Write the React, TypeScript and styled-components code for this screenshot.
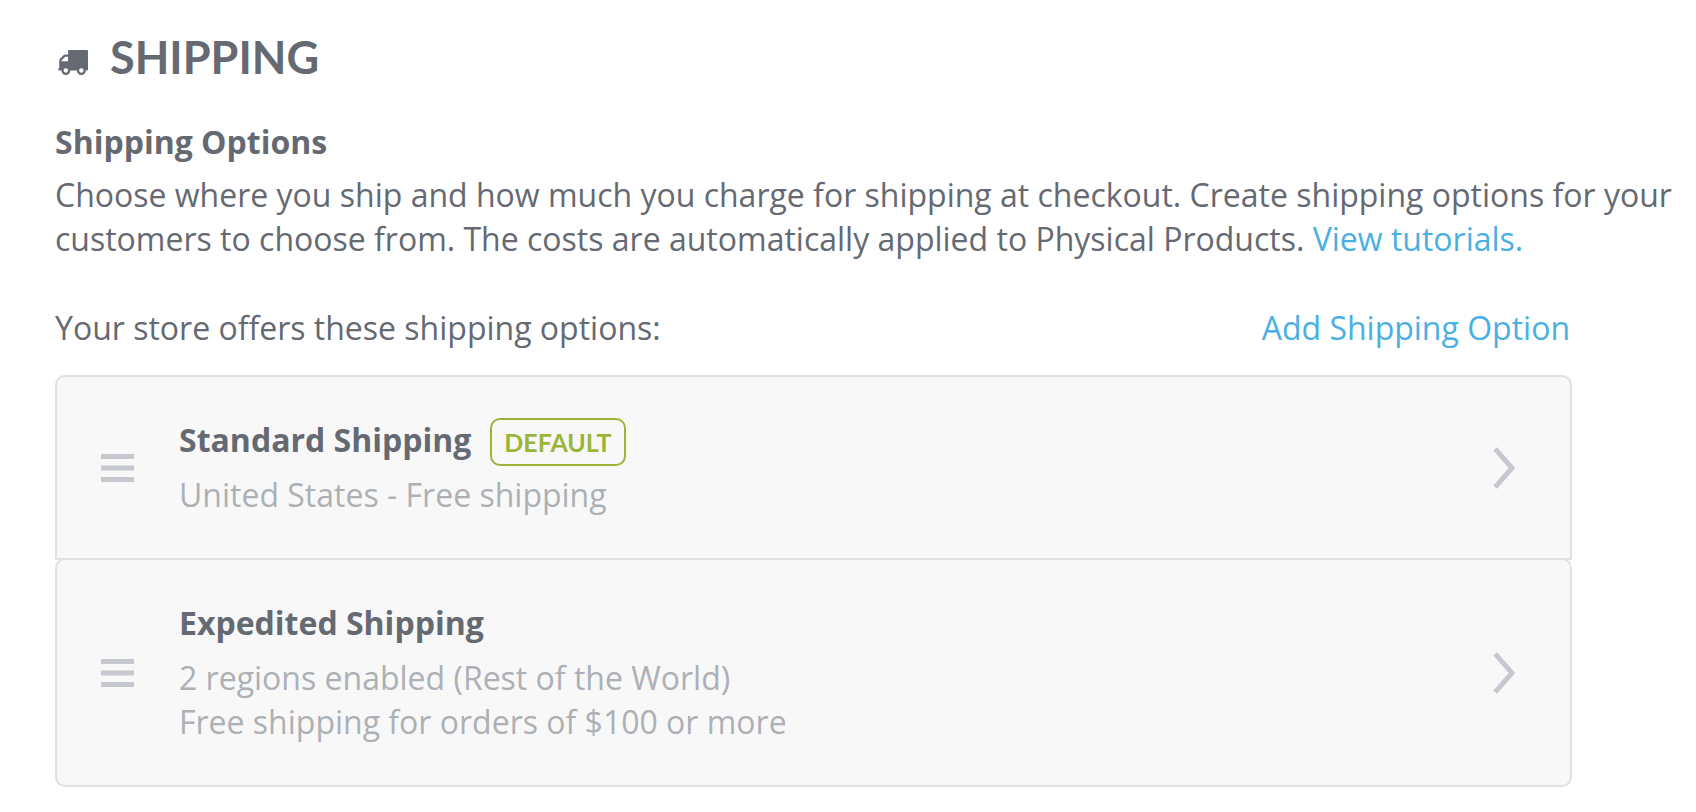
import React from "react";
import styled, { createGlobalStyle } from "styled-components";

const color = {
  text: "#656972",
  muted: "#adb0b4",
  link: "#4ab0e2",
  green: "#9bb53a",
  icon: "#c5c8ce",
  border: "#dfe0e1",
  card: "#f8f8f8",
};

const GlobalStyle = createGlobalStyle`
  *, *::before, *::after { box-sizing: border-box; }
  body {
    margin: 0;
    background: #fff;
    color: ${color.text};
    font-family: "Open Sans", sans-serif;
    font-size: 32px;
    line-height: 44px;
  }
  h1, h2, h3, p, ul { margin: 0; padding: 0; }
`;

const Page = styled.main`
  padding: 31px 8px 24px 55px;
`;

const Header = styled.header`
  display: flex;
  align-items: center;
  gap: 22px;
`;

const TruckIcon = styled.svg`
  width: 31px;
  height: 25px;
  margin-top: 10px;
  margin-left: 2px;
  fill: currentColor;
`;

const PageTitle = styled.h1`
  font-family: Lato, sans-serif;
  font-size: 45px;
  font-weight: 700;
  line-height: 52px;
`;

const SectionTitle = styled.h2`
  margin-top: 37px;
  font-size: 32px;
  font-weight: 700;
  line-height: 44px;
`;

const Description = styled.p`
  margin-top: 9px;
`;

const Link = styled.a`
  color: ${color.link};
  text-decoration: none;
`;

const Options = styled.section`
  margin: 45px 116px 0 0;
`;

const Toolbar = styled.div`
  display: flex;
  justify-content: space-between;
  align-items: center;
  padding-right: 2px;
`;

const TextButton = styled.button`
  padding: 0;
  border: 0;
  background: none;
  color: ${color.link};
  font: inherit;
  cursor: pointer;
`;

const OptionList = styled.ul`
  margin-top: 25px;
  list-style: none;
`;

const OptionCard = styled.li`
  display: flex;
  align-items: center;
  padding: 41px 55px 41px 44px;
  border: 2px solid ${color.border};
  border-radius: 10px;
  background: ${color.card};

  &:not(:last-child) {
    border-bottom-left-radius: 0;
    border-bottom-right-radius: 0;
  }

  & + & {
    margin-top: -2px;
  }
`;

const IconButton = styled.button`
  display: flex;
  flex: none;
  padding: 0;
  border: 0;
  background: none;
  color: ${color.icon};
  cursor: pointer;
`;

const OptionBody = styled.div`
  flex: 1;
  margin-left: 45px;
`;

const OptionHeading = styled.div`
  display: flex;
  align-items: center;
  gap: 19px;
  height: 44px;
`;

const OptionName = styled.h3`
  font-size: 32px;
  font-weight: 700;
  line-height: 44px;
`;

const Badge = styled.span`
  margin-top: 4px;
  padding: 0 12px;
  border: 2px solid ${color.green};
  border-radius: 10px;
  color: ${color.green};
  font-family: Lato, sans-serif;
  font-size: 25px;
  font-weight: 700;
  line-height: 44px;
`;

const OptionDetails = styled.div`
  margin-top: 11px;
  color: ${color.muted};
`;

type ShippingOption = { name: string; isDefault?: boolean; details: string[] };

const shippingOptions: ShippingOption[] = [
  {
    name: "Standard Shipping",
    isDefault: true,
    details: ["United States - Free shipping"],
  },
  {
    name: "Expedited Shipping",
    details: [
      "2 regions enabled (Rest of the World)",
      "Free shipping for orders of $100 or more",
    ],
  },
];

const Truck = () => (
  <TruckIcon viewBox="0 256 1792 1408" preserveAspectRatio="none" aria-hidden="true">
    <path d="M640 1408q0-52-38-90t-90-38-90 38-38 90 38 90 90 38 90-38 38-90zm-384-512h384v-256h-158q-13 0-22 9l-195 195q-9 9-9 22v30zm1280 512q0-52-38-90t-90-38-90 38-38 90 38 90 90 38 90-38 38-90zm256-1088v1024q0 15-4 26.5t-13.5 18.5-16.5 11.5-23.5 6-22.5 2-25.5 0-22.5-.5q0 106-75 181t-181 75-181-75-75-181h-384q0 106-75 181t-181 75-181-75-75-181h-64q-3 0-22.5.5t-25.5 0-22.5-2-23.5-6-16.5-11.5-13.5-18.5-4-26.5q0-26 19-45t45-19v-320q0-8-.5-35t0-38 2.5-34.5 6.5-37 14-30.5 22.5-30l198-198q19-19 50.5-32t58.5-13h160v-192q0-26 19-45t45-19h1024q26 0 45 19t19 45z" />
  </TruckIcon>
);

const Grip = () => (
  <svg width="33" height="28" viewBox="0 0 33 28" fill="currentColor" aria-hidden="true">
    <path d="M0 0h33v5H0zM0 11.5h33v5H0zM0 23h33v5H0z" />
  </svg>
);

const Chevron = () => (
  <svg width="22" height="42" viewBox="0 0 22 42" fill="none" stroke="currentColor" strokeWidth="5" aria-hidden="true">
    <path d="M2.2 1.8 19 21 2.2 40.2" />
  </svg>
);

export default function App() {
  return (
    <>
      <GlobalStyle />
      <Page>
        <Header>
          <Truck />
          <PageTitle>SHIPPING</PageTitle>
        </Header>
        <SectionTitle>Shipping Options</SectionTitle>
        <Description>
          Choose where you ship and how much you charge for shipping at
          checkout. Create shipping options for your customers to choose from.
          The costs are automatically applied to Physical Products.{" "}
          <Link href="#tutorials">View tutorials.</Link>
        </Description>
        <Options>
          <Toolbar>
            <p>Your store offers these shipping options:</p>
            <TextButton type="button">Add Shipping Option</TextButton>
          </Toolbar>
          <OptionList>
            {shippingOptions.map((option) => (
              <OptionCard key={option.name}>
                <IconButton type="button" aria-label={`Reorder ${option.name}`}>
                  <Grip />
                </IconButton>
                <OptionBody>
                  <OptionHeading>
                    <OptionName>{option.name}</OptionName>
                    {option.isDefault && <Badge>DEFAULT</Badge>}
                  </OptionHeading>
                  <OptionDetails>
                    {option.details.map((line) => (
                      <p key={line}>{line}</p>
                    ))}
                  </OptionDetails>
                </OptionBody>
                <IconButton type="button" aria-label={`Edit ${option.name}`}>
                  <Chevron />
                </IconButton>
              </OptionCard>
            ))}
          </OptionList>
        </Options>
      </Page>
    </>
  );
}
